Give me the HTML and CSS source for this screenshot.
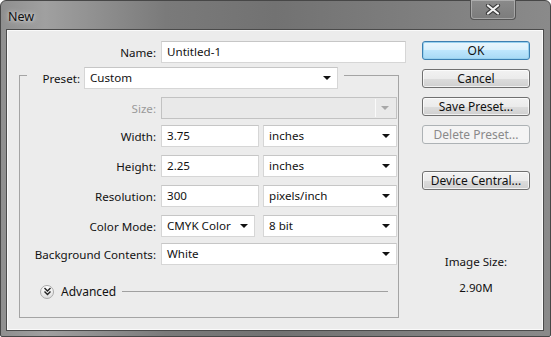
FILE: index.html
```html
<!DOCTYPE html>
<html lang="en">

<head>
    <meta charset="UTF-8">
    <title>New</title>
    <link rel="stylesheet" href="styles.css">
</head>

<body>
    <div class="janela">
        <!-- Barra de titulo -->
        <div class="titulo">
            <span class="titulo-texto">New</span>
            <button class="fechar" aria-label="Close">
                <svg width="16" height="11" viewBox="0 0 16 11">
                    <path d="M3 1.5 L13 9.5 M13 1.5 L3 9.5" stroke="#3a3a3a" stroke-width="4.2" stroke-linecap="round" />
                    <path d="M3 1.5 L13 9.5 M13 1.5 L3 9.5" stroke="#f4f4f4" stroke-width="2.2" stroke-linecap="round" />
                </svg>
            </button>
        </div>

        <!-- Conteudo -->
        <div class="cliente">
            <div class="principal">
                <div class="linha linha-nome">
                    <label class="rotulo rotulo-nome">Name:</label>
                    <div class="campo campo-nome">Untitled-1</div>
                </div>

                <div class="grupo">
                    <div class="grupo-topo">
                        <label class="rotulo rotulo-preset">Preset:</label>
                        <div class="lista lista-preset"><span>Custom</span><i class="seta"></i></div>
                    </div>

                    <div class="linha linha-size">
                        <label class="rotulo desativado">Size:</label>
                        <div class="lista lista-larga lista-desativada"><span></span><i class="divisor"></i><i class="seta"></i></div>
                    </div>

                    <div class="linha linha-width">
                        <label class="rotulo">Width:</label>
                        <div class="campo campo-num">3.75</div>
                        <div class="lista lista-unidade"><span>inches</span><i class="seta"></i></div>
                    </div>

                    <div class="linha">
                        <label class="rotulo">Height:</label>
                        <div class="campo campo-num">2.25</div>
                        <div class="lista lista-unidade"><span>inches</span><i class="seta"></i></div>
                    </div>

                    <div class="linha">
                        <label class="rotulo">Resolution:</label>
                        <div class="campo campo-num">300</div>
                        <div class="lista lista-unidade"><span>pixels/inch</span><i class="seta"></i></div>
                    </div>

                    <div class="linha">
                        <label class="rotulo">Color Mode:</label>
                        <div class="lista lista-modo"><span>CMYK Color</span><i class="seta"></i></div>
                        <div class="lista lista-unidade"><span>8 bit</span><i class="seta"></i></div>
                    </div>

                    <div class="linha linha-fundo">
                        <label class="rotulo">Background Contents:</label>
                        <div class="lista lista-larga"><span>White</span><i class="seta"></i></div>
                    </div>

                    <div class="avancado">
                        <span class="avancado-icone">
                            <svg width="9" height="9" viewBox="0 0 9 9">
                                <path d="M1.5 1 L4.5 4 L7.5 1 M1.5 4.5 L4.5 7.5 L7.5 4.5" fill="none" stroke="#222" stroke-width="1.4" />
                            </svg>
                        </span>
                        <span class="avancado-texto">Advanced</span>
                        <span class="avancado-linha"></span>
                    </div>
                </div>
            </div>

            <div class="lateral">
                <button class="botao botao-ok">OK</button>
                <button class="botao">Cancel</button>
                <button class="botao">Save Preset...</button>
                <button class="botao" disabled>Delete Preset...</button>
                <button class="botao botao-device">Device Central...</button>

                <div class="tamanho">
                    <p class="tamanho-titulo">Image Size:</p>
                    <p class="tamanho-valor">2.90M</p>
                </div>
            </div>
        </div>
    </div>
</body>

</html>
```

FILE: styles.css
```css
/* Configuracao geral */
body {
    margin: 0;
    font-family: "Noto Sans", "Open Sans", sans-serif;
    font-size: 11.6px;
    color: #121212;
}

.janela {
    width: 551px;
    height: 337px;
    box-sizing: border-box;
    border: 1px solid #474747;
    border-radius: 6px 6px 2px 2px;
    padding: 0 6px 5px 5px;
    background: linear-gradient(90deg, #8f8f8f 0%, #a0a0a0 8%, #7a7a7a 30%, #727272 50%, #7e7e7e 75%, #8a8a8a 100%);
    display: flex;
    flex-direction: column;
}

/* Barra de titulo */
.titulo {
    height: 28px;
    display: flex;
    justify-content: space-between;
    align-items: flex-start;
}

.titulo-texto {
    padding: 7px 0 0 2px;
    font-size: 12.5px;
    color: #111;
    text-shadow: 0 0 6px rgba(255, 255, 255, 0.7), 0 0 3px rgba(255, 255, 255, 0.5);
}

.fechar {
    width: 46px;
    height: 20px;
    margin: -1px 28px 0 0;
    padding: 0;
    border: 1px solid #555;
    border-top: none;
    border-radius: 0 0 4px 4px;
    background: linear-gradient(#8a8a8a, #7c7c7c);
    box-shadow: inset 0 0 0 1px rgba(255, 255, 255, 0.3);
    display: flex;
    justify-content: center;
    align-items: center;
}

/* Area do dialogo */
.cliente {
    flex: 1;
    display: flex;
    background: #ececec;
    border: 1px solid #4b4b4b;
    box-shadow: inset 0 0 0 1px #fafafa;
}

.principal {
    width: 415px;
    padding-top: 11px;
}

.linha {
    display: flex;
    align-items: center;
    margin-top: 8px;
}

.linha-nome {
    margin-top: 0;
}

.rotulo {
    width: 136px;
    margin-right: 5px;
    text-align: right;
    white-space: nowrap;
}

.rotulo-nome {
    width: 149px;
}

.desativado {
    color: #9a9a9a;
}

/* Campos */
.campo,
.lista {
    height: 22px;
    box-sizing: border-box;
    background: #fff;
    border: 1px solid #d6d6d6;
    border-top-color: #c6c6c6;
    line-height: 20px;
    padding-left: 5px;
    white-space: nowrap;
}

.campo-nome {
    width: 245px;
}

.campo-num {
    width: 98px;
    margin-right: 4px;
}

.lista {
    display: flex;
    justify-content: space-between;
    align-items: center;
    padding-right: 6px;
}

.lista-preset {
    width: 254px;
}

.lista-larga {
    width: 236px;
}

.lista-unidade {
    width: 134px;
}

.lista-modo {
    width: 94px;
    margin-right: 8px;
}

.seta {
    width: 0;
    height: 0;
    border-left: 4px solid transparent;
    border-right: 4px solid transparent;
    border-top: 4px solid #111;
}

.lista-desativada {
    background: #e9e9e9;
    border-color: #c2c2c2;
    padding-right: 7px;
}

.lista-desativada span {
    flex: 1;
}

.lista-desativada .divisor {
    width: 1px;
    height: 18px;
    background: #fafafa;
    margin-right: 5px;
}

.lista-desativada .seta {
    border-top-color: #a8a8a8;
}

/* Grupo do preset */
.grupo {
    width: 380px;
    box-sizing: border-box;
    margin: 12px 0 0 12px;
    border: 1px solid #a4a4a4;
    height: 243px;
}

.grupo-topo {
    display: flex;
    align-items: center;
    width: fit-content;
    margin: -9px 0 0 7px;
    padding-right: 6px;
    background: #ececec;
}

.rotulo-preset {
    width: 53px;
    margin-right: 4px;
}

.linha-width {
    margin-top: 6px;
}

.linha-fundo {
    margin-top: 6px;
}

/* Avancado */
.avancado {
    display: flex;
    align-items: center;
    margin: 18px 0 0 20px;
}

.avancado-icone {
    width: 14px;
    height: 14px;
    box-sizing: border-box;
    border: 1px solid #a9a9a9;
    border-radius: 50%;
    background: linear-gradient(#ffffff, #dedede);
    display: flex;
    justify-content: center;
    align-items: center;
}

.avancado-texto {
    margin-left: 7px;
    font-size: 12px;
}

.avancado-linha {
    flex: 0 0 266px;
    height: 1px;
    margin-left: 6px;
    background: #a0a0a0;
}

/* Botoes */
.lateral {
    width: 108px;
    padding-top: 11px;
    display: flex;
    flex-direction: column;
}

.botao {
    height: 19px;
    margin-bottom: 9px;
    padding: 0;
    font-family: inherit;
    font-size: 12px;
    color: #111;
    border: 1px solid #707070;
    border-radius: 3px;
    background: linear-gradient(#f2f2f2 0%, #ebebeb 50%, #dddddd 50%, #cfcfcf 100%);
    box-shadow: inset 0 0 0 1px rgba(255, 255, 255, 0.7);
}

.botao-ok {
    border-color: #3c7fb1;
    background: linear-gradient(#eaf6fd 0%, #d9f0fc 50%, #bee6fd 50%, #a7d9f5 100%);
    box-shadow: inset 0 0 0 1px #98d1ef;
}

.botao:disabled {
    color: #8a8a8a;
    border-color: #adb2b5;
    background: #f4f4f4;
    box-shadow: none;
}

.botao-device {
    margin-top: 18px;
}

.tamanho {
    margin-top: 55px;
    text-align: center;
}

.tamanho p {
    margin: 0 0 11px;
}
```
